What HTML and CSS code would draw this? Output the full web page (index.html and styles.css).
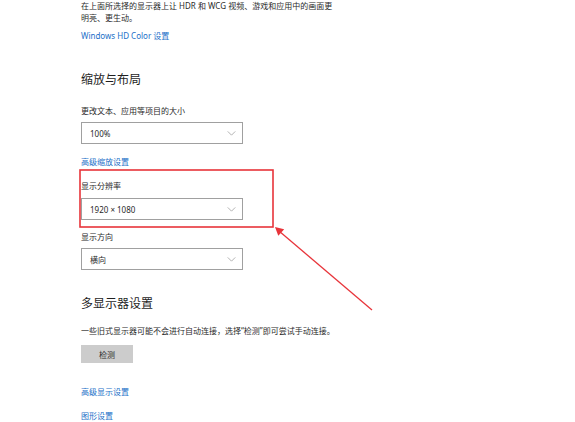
FILE: index.html
```html
<!DOCTYPE html>
<html lang="zh-CN">
<head>
<meta charset="utf-8">
<link rel="stylesheet" href="styles.css">
</head>
<body>
<div class="page">
  <p class="text">在上面所选择的显示器上让 HDR 和 WCG 视频、游戏和应用中的画面更<br>明亮、更生动。</p>
  <a class="link first-link">Windows HD Color 设置</a>

  <h2 class="heading h-scale">缩放与布局</h2>
  <p class="text label-size">更改文本、应用等项目的大小</p>
  <div class="select sel-1"><span>100%</span><svg class="chev" viewBox="0 0 10 6" width="9" height="5"><path d="M0.5 0.5 L5 5 L9.5 0.5" fill="none" stroke="#9a9a9a" stroke-width="0.9"/></svg></div>
  <a class="link link-adv-scale">高级缩放设置</a>

  <p class="text label-res">显示分辨率</p>
  <div class="select sel-2"><span>1920 × 1080</span><svg class="chev" viewBox="0 0 10 6" width="9" height="5"><path d="M0.5 0.5 L5 5 L9.5 0.5" fill="none" stroke="#9a9a9a" stroke-width="0.9"/></svg></div>
  <p class="text label-orient">显示方向</p>
  <div class="select sel-3"><span>横向</span><svg class="chev" viewBox="0 0 10 6" width="9" height="5"><path d="M0.5 0.5 L5 5 L9.5 0.5" fill="none" stroke="#9a9a9a" stroke-width="0.9"/></svg></div>

  <h2 class="heading h-multi">多显示器设置</h2>
  <p class="text label-multi">一些旧式显示器可能不会进行自动连接，选择“检测”即可尝试手动连接。</p>
  <div class="button">检测</div>
  <a class="link link-adv-display">高级显示设置</a>
  <a class="link link-graphics">图形设置</a>

  <svg class="overlay" width="575" height="422" viewBox="0 0 575 422">
    <rect x="80" y="170" width="193" height="57" fill="none" stroke="#e8343a" stroke-width="1.6"/>
    <line x1="372" y1="310" x2="279" y2="231" stroke="#e8343a" stroke-width="1.3"/>
    <polygon points="275,227 284.2,229.2 278.3,235.8" fill="#e8343a"/>
  </svg>
</div>
</body>
</html>
```

FILE: styles.css
```css
html, body {
  margin: 0;
  padding: 0;
  background: #ffffff;
}
.page {
  position: relative;
  width: 575px;
  height: 422px;
  overflow: hidden;
  padding-left: 81px;
  box-sizing: border-box;
  font-family: "Noto Sans", "Noto Sans CJK SC", sans-serif;
  color: #2a2a2a;
}
.text {
  margin: 0;
  font-size: 8px;
  line-height: 12px;
}
.link {
  display: block;
  font-size: 8px;
  line-height: 12px;
  color: #1b6fc8;
}
.first-link { margin-top: 6px; }
.heading {
  margin: 0;
  font-size: 12px;
  font-weight: normal;
  line-height: 16px;
  color: #1f1f1f;
}
.h-scale { margin-top: 30px; }
.label-size { margin-top: 17px; }
.select {
  box-sizing: border-box;
  width: 162px;
  height: 22px;
  border: 1px solid #a0a0a0;
  display: flex;
  align-items: center;
  justify-content: space-between;
  padding: 0 6px 0 8px;
  font-size: 8px;
  color: #2a2a2a;
}
.chev { display: block; }
.sel-1 { margin-top: 5px; }
.link-adv-scale { margin-top: 12px; }
.label-res { margin-top: 12px; }
.sel-2 { margin-top: 6px; }
.label-orient { margin-top: 11px; }
.sel-3 { margin-top: 5px; }
.h-multi { margin-top: 26px; }
.label-multi { margin-top: 13px; }
.button {
  margin-top: 8px;
  width: 52px;
  height: 18px;
  background: #cccccc;
  font-size: 8px;
  display: flex;
  align-items: center;
  justify-content: center;
  color: #2a2a2a;
}
.link-adv-display { margin-top: 23px; }
.link-graphics { margin-top: 12px; }
.overlay {
  position: absolute;
  left: 0;
  top: 0;
}
```
